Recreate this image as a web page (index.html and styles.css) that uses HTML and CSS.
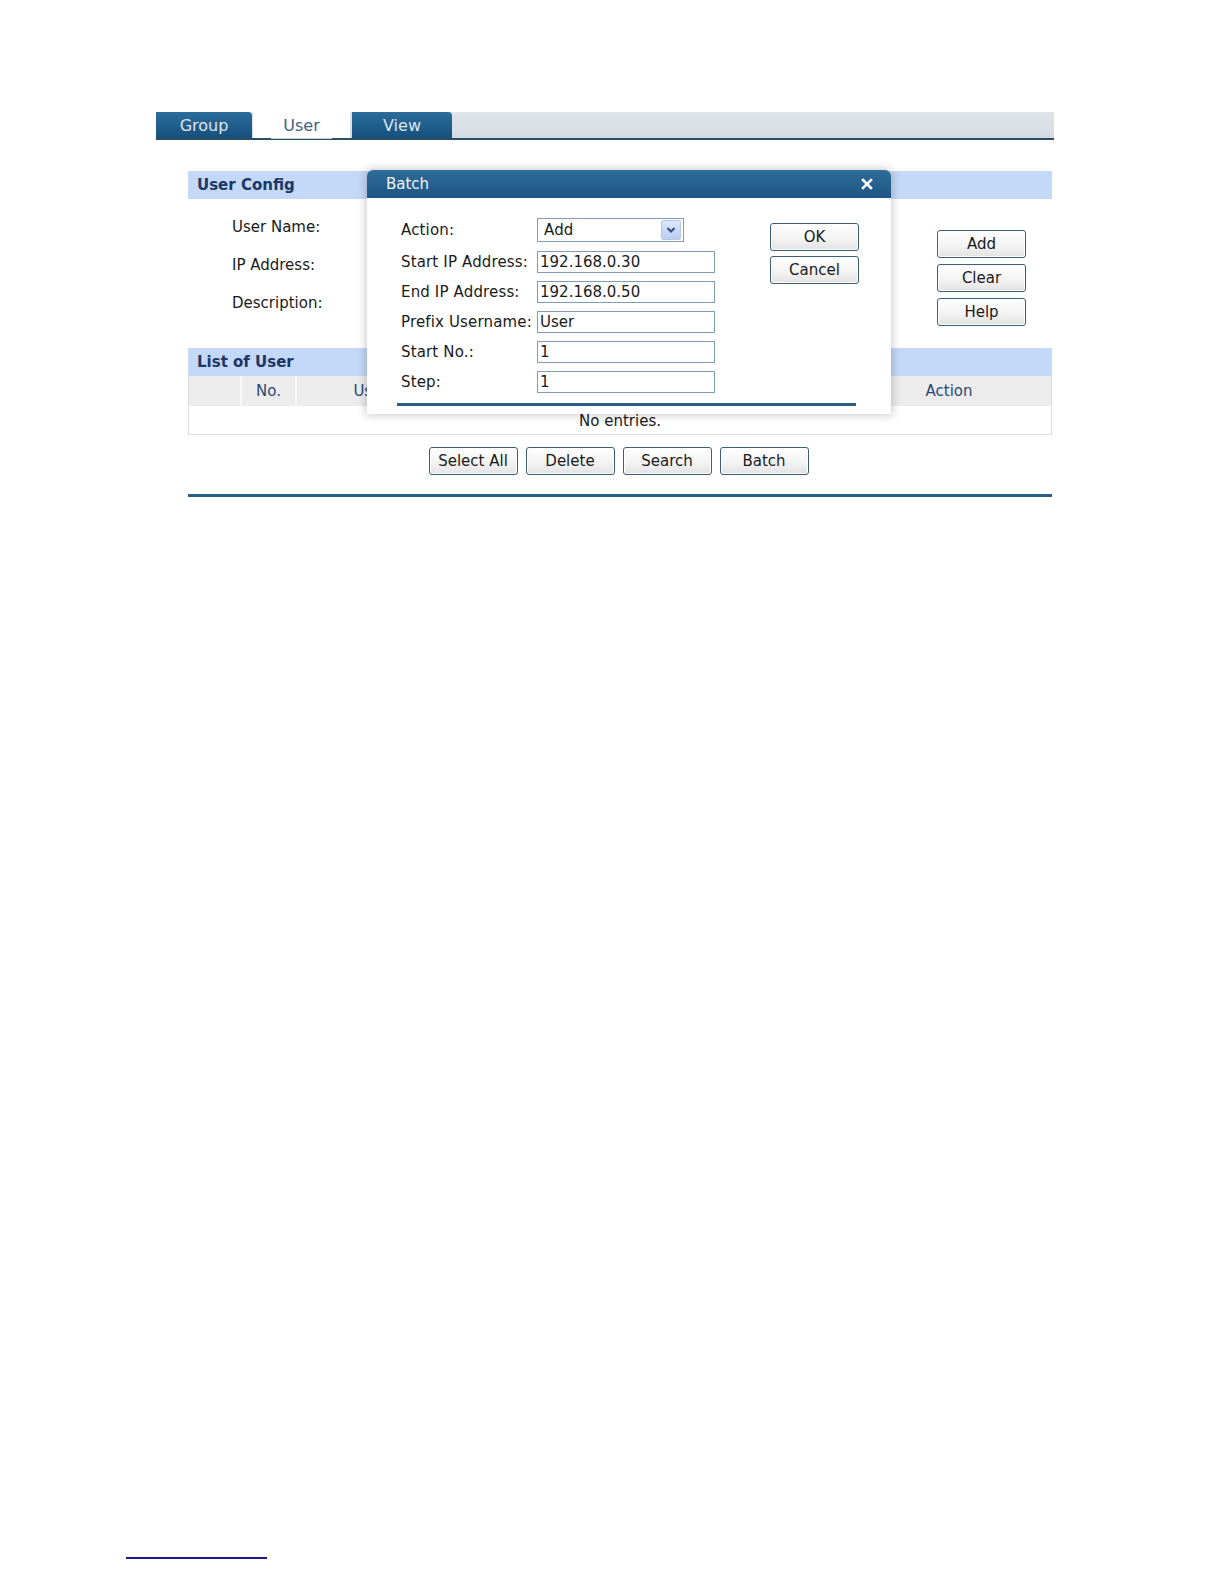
FILE: index.html
```html
<!DOCTYPE html>
<html>
<head>
<meta charset="utf-8">
<link rel="stylesheet" href="styles.css">
</head>
<body>
<div class="page">
  <div class="tabs">
    <div class="tab dark">Group</div>
    <div class="tab active"><span>User</span></div>
    <div class="tab dark view">View</div>
    <div class="tab-rest"></div>
  </div>

  <div class="content">
    <div class="sec-head">User Config</div>
    <div class="config">
      <div class="labels">
        <div class="lbl">User Name:</div>
        <div class="lbl">IP Address:</div>
        <div class="lbl">Description:</div>
      </div>
      <div class="side-btns">
        <button class="btn">Add</button>
        <button class="btn">Clear</button>
        <button class="btn">Help</button>
      </div>
    </div>

    <div class="sec-head">List of User</div>
    <div class="table">
      <div class="thead">
        <div class="th c1"></div>
        <div class="th c2">No.</div>
        <div class="th c3">User Name</div>
        <div class="th c4">IP Address</div>
        <div class="th c5">Action</div>
      </div>
      <div class="tbody">No entries.</div>
    </div>
    <div class="bottom-btns">
      <button class="btn">Select All</button>
      <button class="btn">Delete</button>
      <button class="btn">Search</button>
      <button class="btn">Batch</button>
    </div>
    <div class="end-rule"></div>
  </div>

  <div class="modal">
    <div class="modal-title">
      <span>Batch</span>
      <svg class="close" width="12" height="12" viewBox="0 0 12 12"><path d="M2 2 L10 10 M10 2 L2 10" stroke="#fff" stroke-width="2.6" stroke-linecap="square"/></svg>
    </div>
    <div class="modal-body">
      <div class="form">
        <div class="row"><label>Action:</label>
          <div class="select"><span>Add</span><div class="arrow"><svg width="10" height="8" viewBox="0 0 10 8"><path d="M1.5 2 L5 5.5 L8.5 2" fill="none" stroke="#2c4f8a" stroke-width="2"/></svg></div></div>
        </div>
        <div class="row"><label>Start IP Address:</label><div class="input">192.168.0.30</div></div>
        <div class="row"><label>End IP Address:</label><div class="input">192.168.0.50</div></div>
        <div class="row"><label>Prefix Username:</label><div class="input">User</div></div>
        <div class="row"><label>Start No.:</label><div class="input">1</div></div>
        <div class="row"><label>Step:</label><div class="input">1</div></div>
      </div>
      <div class="modal-btns">
        <button class="btn">OK</button>
        <button class="btn">Cancel</button>
      </div>
    </div>
    <div class="modal-rule"></div>
  </div>
</div>
<div class="footnote-rule"></div>
</body>
</html>
```

FILE: styles.css
```css
html, body {
  margin: 0;
  padding: 0;
  background: #ffffff;
}
html {
  height: 1584px;
  overflow: hidden;
}
body {
  font-family: "DejaVu Sans", Verdana, sans-serif;
  font-size: 15px;
  color: #1a1a1a;
}
.page {
  position: relative;
  margin-left: 156px;
  padding-top: 112px;
  width: 898px;
}
.tabs {
  display: flex;
  height: 26px;
  border-bottom: 2px solid #2c4d63;
  background: linear-gradient(#dfe5ea, #d3dbe2);
}
.tab {
  height: 26px;
  line-height: 28px;
  text-align: center;
  font-size: 16px;
}
.tab.dark {
  width: 96px;
  background: linear-gradient(#2c6d9c, #16507d);
  color: #dbe6ef;
  border-top-right-radius: 4px;
}
.tab.view {
  width: 100px;
  margin-left: 2px;
}
.tab.active {
  width: 97px;
  margin-left: 1px;
  background: #fff;
  color: #3e6282;
}
.tab.active span {
  display: inline-block;
  border-bottom: 1px solid #c9cfd4;
  padding: 0 12px;
  line-height: 25px;
}
.tab-rest {
  flex: 1;
}
.content {
  margin-left: 32px;
  width: 864px;
  padding-top: 31px;
}
.sec-head {
  height: 28px;
  line-height: 29px;
  background: #c4d8f7;
  color: #1d3767;
  font-weight: bold;
  padding-left: 9px;
}
.config {
  height: 149px;
  display: flex;
  justify-content: space-between;
}
.labels {
  padding-left: 44px;
  padding-top: 18px;
}
.lbl {
  height: 38px;
  line-height: 20px;
}
.side-btns {
  display: flex;
  flex-direction: column;
  gap: 6px;
  padding-top: 31px;
  padding-right: 26px;
}
.btn {
  width: 89px;
  height: 28px;
  border: 1px solid #3d5d79;
  border-radius: 3px;
  background: linear-gradient(#ffffff, #f2f2f2 60%, #e2e2e2);
  font-family: "DejaVu Sans", Verdana, sans-serif;
  font-size: 15px;
  color: #1a1a1a;
  padding: 0;
  box-shadow: inset 0 0 0 1px #fff;
}
.table {
  border: 1px solid #dedede;
  border-top: none;
}
.thead {
  display: grid;
  grid-template-columns: 53px 55px 198px 1fr 204px;
  height: 30px;
  background: #ececec;
}
.th {
  border-right: 2px solid #f7f7f7;
  line-height: 30px;
  text-align: center;
  color: #2b4877;
}
.th.c5 { border-right: none; }
.tbody {
  height: 28px;
  line-height: 30px;
  text-align: center;
  color: #1a1a1a;
  background: #fff;
}
.bottom-btns {
  display: flex;
  justify-content: center;
  gap: 8px;
  padding-top: 12px;
  padding-right: 3px;
}
.end-rule {
  margin-top: 19px;
  height: 3px;
  background: #2a5f85;
}
.modal {
  position: absolute;
  left: 211px;
  top: 170px;
  width: 524px;
  height: 244px;
  background: #fff;
  border-radius: 6px 6px 0 0;
  box-shadow: 0 0 8px 2px rgba(0, 0, 0, 0.18);
  letter-spacing: 0.15px;
}
.modal-title {
  height: 28px;
  border-radius: 6px 6px 0 0;
  background: linear-gradient(#2f6c99, #1d5585);
  color: #eef4f9;
  display: flex;
  align-items: center;
  justify-content: space-between;
  padding: 0 18px 0 19px;
  font-size: 15px;
  letter-spacing: 0;
}
.close {
  display: block;
}
.modal-body {
  display: flex;
  padding: 22px 0 0 34px;
}
.form {
  width: 339px;
}
.row {
  display: flex;
  align-items: center;
  height: 30px;
}
.row:first-child {
  height: 24px;
  margin-bottom: 5px;
  margin-top: -2px;
}
.row label {
  width: 136px;
}
.input {
  width: 174px;
  height: 20px;
  line-height: 21px;
  border: 1px solid #7f9db9;
  padding-left: 2px;
  letter-spacing: 0;
}
.select {
  width: 139px;
  height: 22px;
  border: 1px solid #7f9db9;
  display: flex;
  align-items: center;
  justify-content: space-between;
  padding-left: 6px;
}
.arrow {
  width: 18px;
  height: 18px;
  margin-right: 2px;
  background: linear-gradient(#dde8fa, #b8cdf0);
  border: 1px solid #b6c8e6;
  border-radius: 2px;
  display: flex;
  align-items: center;
  justify-content: center;
}
.modal-btns {
  display: flex;
  flex-direction: column;
  gap: 5px;
  padding-left: 30px;
  padding-top: 3px;
  letter-spacing: 0;
}
.modal-rule {
  margin: 6px 35px 0 30px;
  height: 3px;
  background: #2a5f85;
}
.footnote-rule {
  margin-left: 126px;
  margin-top: 1060px;
  width: 141px;
  height: 2px;
  background: #1a1a8c;
}
```
